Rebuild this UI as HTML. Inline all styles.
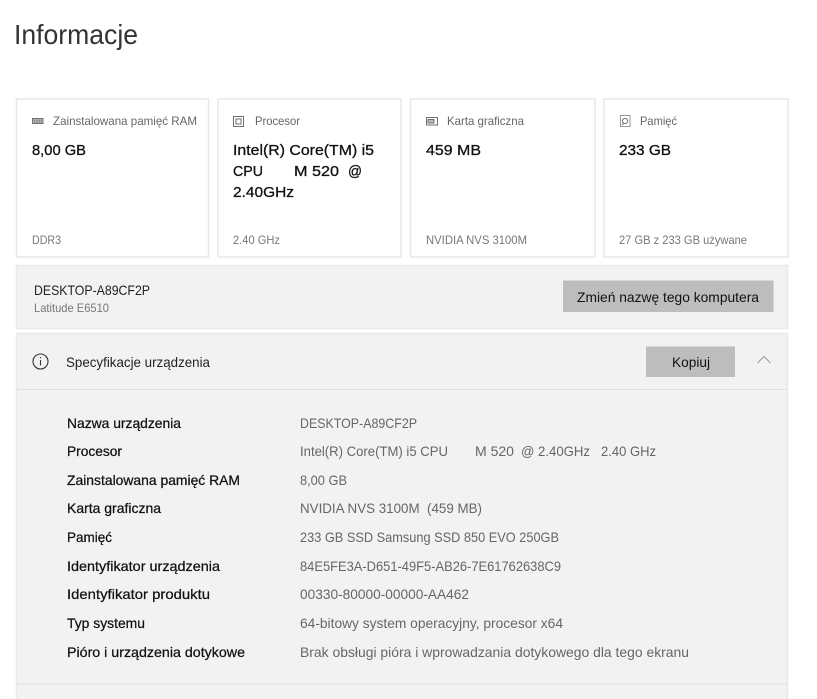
<!DOCTYPE html>
<html lang="pl">
<head>
<meta charset="utf-8">
<title>Informacje</title>
<style>
html,body{margin:0;padding:0;background:#fff;width:817px;height:699px;overflow:hidden}
svg{display:block}
text{font-family:"Liberation Sans",sans-serif;white-space:pre}
.h{font-size:28px;fill:#333}
.t{font-size:12px;fill:#666}
.v{font-size:15px;fill:#111;stroke:#111;stroke-width:.3px}
.f{font-size:12px;fill:#777}
.n{font-size:14px;fill:#222}
.b{font-size:14px;fill:#111}
.l{font-size:14px;fill:#111;stroke:#111;stroke-width:.25px}
.d{font-size:14px;fill:#666}
.card{fill:#fff;stroke:#e8e8e8;stroke-width:1.5}
.panel{fill:#f2f2f2;stroke:#e9e9e9;stroke-width:1.5}
.ic{fill:none;stroke:#6f6f6f;stroke-width:1}
</style>
</head>
<body>
<svg width="817" height="699" viewBox="0 0 817 699" xmlns="http://www.w3.org/2000/svg">
<text class="h" x="14" y="44" textLength="124" lengthAdjust="spacingAndGlyphs">Informacje</text>

<rect class="card" x="16.5" y="99" width="192" height="158"/>
<rect class="card" x="218" y="99" width="183" height="158"/>
<rect class="card" x="410.5" y="99" width="184.5" height="158"/>
<rect class="card" x="604" y="99" width="184" height="158"/>

<g class="ic">
<rect x="32.5" y="118.5" width="10.5" height="5" fill="#bbb"/>
<path d="M34 120.200h8M34 122h8" stroke-dasharray="1 .7"/>
<rect x="233.5" y="116.5" width="10" height="10"/>
<rect x="236" y="119" width="5" height="5"/>
<rect x="426.5" y="117.5" width="11" height="7.5"/>
<rect x="428" y="119.5" width="6" height="3.5" fill="#bbb"/>
<rect x="620.5" y="115.5" width="9.5" height="11" stroke="#999"/>
<circle cx="625" cy="121" r="2.6"/>
<path d="M622 125l2-2"/>
</g>

<text class="t" x="53" y="125" textLength="144" lengthAdjust="spacingAndGlyphs">Zainstalowana pamięć RAM</text>
<text class="t" x="255" y="125" textLength="45" lengthAdjust="spacingAndGlyphs">Procesor</text>
<text class="t" x="447" y="125" textLength="77" lengthAdjust="spacingAndGlyphs">Karta graficzna</text>
<text class="t" x="640" y="125" textLength="37" lengthAdjust="spacingAndGlyphs">Pamięć</text>

<text class="v" x="32" y="155" textLength="54" lengthAdjust="spacingAndGlyphs">8,00 GB</text>
<text class="v" x="233" y="155" textLength="141" lengthAdjust="spacingAndGlyphs">Intel(R) Core(TM) i5</text>
<text class="v" x="233" y="176" textLength="30" lengthAdjust="spacingAndGlyphs">CPU</text>
<text class="v" x="294" y="176" textLength="45" lengthAdjust="spacingAndGlyphs">M 520</text>
<text class="v" x="348" y="176" textLength="14" lengthAdjust="spacingAndGlyphs">@</text>
<text class="v" x="233" y="197" textLength="61" lengthAdjust="spacingAndGlyphs">2.40GHz</text>
<text class="v" x="426" y="155" textLength="55" lengthAdjust="spacingAndGlyphs">459 MB</text>
<text class="v" x="619" y="155" textLength="52" lengthAdjust="spacingAndGlyphs">233 GB</text>

<text class="f" x="32" y="244" textLength="29" lengthAdjust="spacingAndGlyphs">DDR3</text>
<text class="f" x="233" y="244" textLength="47" lengthAdjust="spacingAndGlyphs">2.40 GHz</text>
<text class="f" x="426" y="244" textLength="101" lengthAdjust="spacingAndGlyphs">NVIDIA NVS 3100M</text>
<text class="f" x="619" y="244" textLength="128" lengthAdjust="spacingAndGlyphs">27 GB z 233 GB używane</text>

<rect class="panel" x="16.5" y="265.5" width="771" height="63"/>
<text class="n" x="34" y="295" textLength="116" lengthAdjust="spacingAndGlyphs">DESKTOP-A89CF2P</text>
<text class="f" x="34" y="312" textLength="75" lengthAdjust="spacingAndGlyphs">Latitude E6510</text>
<rect x="563" y="280.5" width="210.5" height="31.5" fill="#bdbdbd"/>
<text class="b" x="577" y="302" textLength="182" lengthAdjust="spacingAndGlyphs">Zmień nazwę tego komputera</text>

<rect class="panel" x="16.5" y="333.5" width="771" height="380"/>
<path d="M17 389.5H787" stroke="#e0e0e0" stroke-width="1"/>
<path d="M17 684H787" stroke="#e6e6e6" stroke-width="1.5"/>
<circle cx="40.5" cy="361.5" r="7.5" fill="none" stroke="#333" stroke-width="1.1"/>
<path d="M40.5 360v5.5M40.5 357v1.3" stroke="#333" stroke-width="1.1" fill="none"/>
<text class="n" x="66" y="367" textLength="144" lengthAdjust="spacingAndGlyphs">Specyfikacje urządzenia</text>
<rect x="646" y="346.5" width="89" height="30.5" fill="#bdbdbd"/>
<text class="b" x="672" y="367" textLength="38" lengthAdjust="spacingAndGlyphs">Kopiuj</text>
<path d="M757.5 363l6.5-6.5 6.5 6.500" fill="none" stroke="#999" stroke-width="1"/>

<text class="l" x="67" y="428" textLength="114" lengthAdjust="spacingAndGlyphs">Nazwa urządzenia</text>
<text class="l" x="67" y="456" textLength="55" lengthAdjust="spacingAndGlyphs">Procesor</text>
<text class="l" x="67" y="485" textLength="173" lengthAdjust="spacingAndGlyphs">Zainstalowana pamięć RAM</text>
<text class="l" x="67" y="513" textLength="94" lengthAdjust="spacingAndGlyphs">Karta graficzna</text>
<text class="l" x="67" y="542" textLength="45" lengthAdjust="spacingAndGlyphs">Pamięć</text>
<text class="l" x="67" y="571" textLength="153" lengthAdjust="spacingAndGlyphs">Identyfikator urządzenia</text>
<text class="l" x="67" y="599" textLength="143" lengthAdjust="spacingAndGlyphs">Identyfikator produktu</text>
<text class="l" x="67" y="628" textLength="78" lengthAdjust="spacingAndGlyphs">Typ systemu</text>
<text class="l" x="67" y="657" textLength="178" lengthAdjust="spacingAndGlyphs">Pióro i urządzenia dotykowe</text>

<text class="d" x="300" y="428" textLength="117" lengthAdjust="spacingAndGlyphs">DESKTOP-A89CF2P</text>
<text class="d" x="300" y="456" textLength="148" lengthAdjust="spacingAndGlyphs">Intel(R) Core(TM) i5 CPU</text>
<text class="d" x="475" y="456" textLength="39" lengthAdjust="spacingAndGlyphs">M 520</text>
<text class="d" x="521" y="456" textLength="69" lengthAdjust="spacingAndGlyphs">@ 2.40GHz</text>
<text class="d" x="601" y="456" textLength="55" lengthAdjust="spacingAndGlyphs">2.40 GHz</text>
<text class="d" x="300" y="485" textLength="47" lengthAdjust="spacingAndGlyphs">8,00 GB</text>
<text class="d" x="300" y="513" textLength="182" lengthAdjust="spacingAndGlyphs">NVIDIA NVS 3100M  (459 MB)</text>
<text class="d" x="300" y="542" textLength="259" lengthAdjust="spacingAndGlyphs">233 GB SSD Samsung SSD 850 EVO 250GB</text>
<text class="d" x="300" y="571" textLength="261" lengthAdjust="spacingAndGlyphs">84E5FE3A-D651-49F5-AB26-7E61762638C9</text>
<text class="d" x="300" y="599" textLength="169" lengthAdjust="spacingAndGlyphs">00330-80000-00000-AA462</text>
<text class="d" x="300" y="628" textLength="263" lengthAdjust="spacingAndGlyphs">64-bitowy system operacyjny, procesor x64</text>
<text class="d" x="300" y="657" textLength="389" lengthAdjust="spacingAndGlyphs">Brak obsługi pióra i wprowadzania dotykowego dla tego ekranu</text>
</svg>
</body>
</html>
